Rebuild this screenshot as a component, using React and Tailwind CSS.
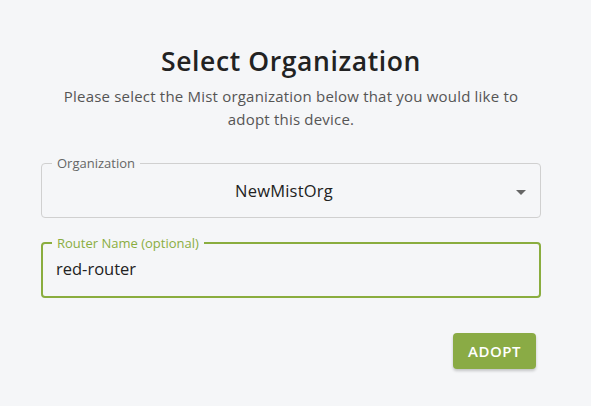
import React, { useState } from 'react';

const font = { fontFamily: '"Open Sans", "Liberation Sans", sans-serif' };

const App = () => {
  const [org] = useState('NewMistOrg');
  const [name, setName] = useState('red-router');

  return (
    <div className="w-[591px] h-[406px] bg-[#f5f6f8] overflow-hidden" style={font}>
      <div className="w-[500px] ml-[41px] pt-[43px]">
        {/* Heading */}
        <h1 className="text-center text-[26.5px] leading-[36px] font-semibold text-[#222] tracking-[0.6px]">
          Select Organization
        </h1>
        <p className="mt-[6px] mx-auto w-[478px] text-center text-[15px] leading-[22.5px] text-[#555] tracking-[0.2px]">
          Please select the Mist organization below that you would like to adopt this device.
        </p>

        {/* Organization select */}
        <fieldset className="mt-[26px] h-[62px] border border-[#d0d0d0] rounded-[4px] px-[10px] pb-[4px]">
          <legend className="px-[5px] text-[13px] leading-[14px] text-[#666]">Organization</legend>
          <div className="h-full flex items-center">
            <div className="flex-1 text-center text-[16.5px] text-[#222] tracking-[0.2px]">{org}</div>
            <svg width="10" height="5" viewBox="0 0 10 5" className="mr-[4px] mt-[2px]">
              <path d="M0 0 L10 0 L5 5 Z" fill="#666" />
            </svg>
          </div>
        </fieldset>

        {/* Router name */}
        <fieldset className="mt-[18px] h-[62px] border-2 border-[#8aad3f] rounded-[4px] px-[9px] pb-[4px]">
          <legend className="px-[5px] text-[13px] leading-[14px] text-[#8aad3f]">Router Name (optional)</legend>
          <div className="pl-[4px] h-[38px] flex items-center">
            <input
              value={name}
              onChange={(e) => setName(e.target.value)}
              className="w-full bg-transparent outline-none text-[16.5px] text-[#222]"
              style={font}
            />
          </div>
        </fieldset>

        <div className="flex justify-end mt-[35px] pr-[5px]">
          <button className="h-[36px] w-[83px] rounded-[4px] bg-[#8aab45] text-white text-[15px] font-semibold tracking-[0.5px] shadow-[0_2px_3px_rgba(0,0,0,0.2)]">
            ADOPT
          </button>
        </div>
      </div>
    </div>
  );
};

export default App;
